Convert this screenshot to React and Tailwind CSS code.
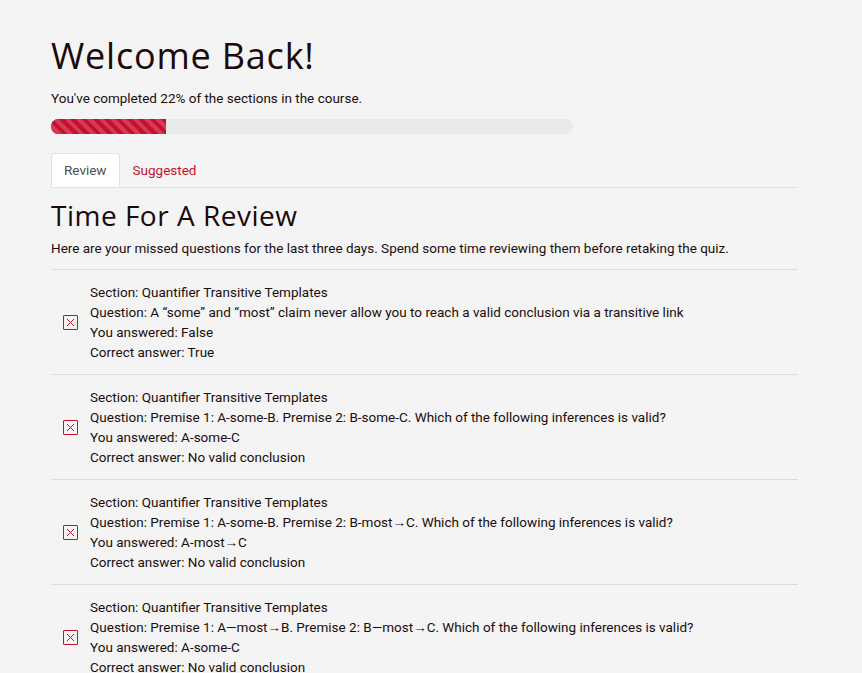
import React from 'react';

const items = [
  {
    question: 'A \u201csome\u201d and \u201cmost\u201d claim never allow you to reach a valid conclusion via a transitive link',
    answered: 'False',
    correct: 'True',
  },
  {
    question: 'Premise 1: A-some-B. Premise 2: B-some-C. Which of the following inferences is valid?',
    answered: 'A-some-C',
    correct: 'No valid conclusion',
  },
  {
    question: 'Premise 1: A-some-B. Premise 2: B-most\u2192C. Which of the following inferences is valid?',
    answered: 'A-most\u2192C',
    correct: 'No valid conclusion',
  },
  {
    question: 'Premise 1: A\u2014most\u2192B. Premise 2: B\u2014most\u2192C. Which of the following inferences is valid?',
    answered: 'A-some-C',
    correct: 'No valid conclusion',
  },
];

function MissIcon() {
  return (
    <div className="w-[15px] h-[15px] border border-[#c8102e] rounded-[1px] flex items-center justify-center shrink-0">
      <svg width="9" height="9" viewBox="0 0 9 9" fill="none" stroke="#c8102e" strokeWidth="1">
        <path d="M1 1 L8 8 M8 1 L1 8" />
      </svg>
    </div>
  );
}

export default function App() {
  return (
    <div className="bg-[#f4f4f4] min-h-screen text-[#1a0e0e]" style={{ fontFamily: 'Roboto, "Liberation Sans", sans-serif' }}>
      <main className="pl-[51px] pr-[64px] pt-[34px]">
        {/* Header */}
        <h1 className="text-[36px] leading-[44px] font-normal text-[#1a0a0a] tracking-[0.8px] [font-family:'Open_Sans',sans-serif]">
          Welcome Back!
        </h1>
        <p className="mt-[10px] text-[13.5px] leading-[20px]">You've completed 22% of the sections in the course.</p>

        {/* Progress */}
        <div className="mt-[11px] w-[522px] h-[15px] rounded-full bg-[#e8ebee] overflow-hidden">
          <div className="h-full w-[22%] bg-[#c8102e] bg-[repeating-linear-gradient(45deg,#c8102e_0px,#c8102e_4px,#d23a55_4px,#d23a55_8px)]" />
        </div>

        {/* Tabs */}
        <div className="mt-[19px] flex border-b border-[#dee2e6] text-[13.5px]">
          <div className="-mb-px px-[12px] h-[34px] flex items-center bg-white border border-[#dee2e6] border-b-white rounded-t-[3px] text-[#495057]">
            Review
          </div>
          <div className="px-[13px] h-[34px] flex items-center text-[#c8102e]">Suggested</div>
        </div>

        {/* Review */}
        <h2 className="mt-[11px] text-[28px] leading-[32px] font-normal text-[#1a0a0a] tracking-[0.5px] [font-family:'Open_Sans',sans-serif]">
          Time For A Review
        </h2>
        <p className="mt-[7px] text-[13.5px] leading-[20px]">
          Here are your missed questions for the last three days. Spend some time reviewing them before retaking the quiz.
        </p>

        <div className="mt-[11px] border-t border-[#dcdcdc]">
          {items.map((item, i) => (
            <div key={i} className="flex items-center border-b border-[#dcdcdc] pt-[12px] pb-[12px]">
              <div className="w-[39px] pl-[12px]">
                <MissIcon />
              </div>
              <div className="text-[13.5px] leading-[20px]">
                <div>Section: Quantifier Transitive Templates</div>
                <div>Question: {item.question}</div>
                <div>You answered: {item.answered}</div>
                <div>Correct answer: {item.correct}</div>
              </div>
            </div>
          ))}
        </div>
      </main>
    </div>
  );
}
